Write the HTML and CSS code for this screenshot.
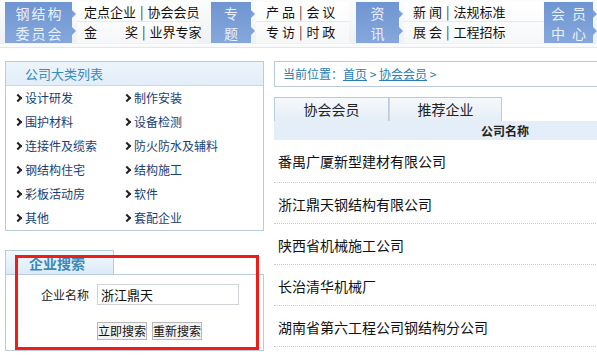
FILE: index.html
```html
<!DOCTYPE html>
<html lang="zh-CN">
<head>
<meta charset="utf-8">
<title>协会会员</title>
<link rel="stylesheet" href="styles.css">
</head>
<body>
<div class="page">
  <div class="header">
    <div class="group g1">
      <div class="blk b1"><div class="bl">钢结构</div><div class="bl">委员会</div></div>
      <div class="notches"><i></i><i></i></div>
      <div class="links l1">
        <div class="lrow">定点企业<span class="sep">|</span>协会会员</div>
        <div class="lrow">金<span class="sp2"></span>奖<span class="sep">|</span>业界专家</div>
      </div>
    </div>
    <div class="group g2">
      <div class="blk b2"><div class="bl">专</div><div class="bl">题</div></div>
      <div class="notches"><i></i><i></i></div>
      <div class="links l2">
        <div class="lrow wide">产 品<span class="sep">|</span>会 议</div>
        <div class="lrow wide">专 访<span class="sep">|</span>时 政</div>
      </div>
    </div>
    <div class="group g3">
      <div class="blk b3"><div class="bl">资</div><div class="bl">讯</div></div>
      <div class="notches"><i></i><i></i></div>
      <div class="links l3">
        <div class="lrow">新 闻<span class="sep">|</span>法规标准</div>
        <div class="lrow">展 会<span class="sep">|</span>工程招标</div>
      </div>
    </div>
    <div class="group g4">
      <div class="blk b4"><div class="bl">会 员</div><div class="bl">中 心</div></div>
      <div class="notches"><i></i><i></i></div>
    </div>
  </div>

  <div class="main">
    <div class="side">
      <div class="catbox">
        <div class="cathead">公司大类列表</div>
        <ul class="catlist">
          <li>设计研发</li><li>制作安装</li>
          <li>围护材料</li><li>设备检测</li>
          <li>连接件及缆索</li><li>防火防水及辅料</li>
          <li>钢结构住宅</li><li>结构施工</li>
          <li>彩板活动房</li><li>软件</li>
          <li>其他</li><li>套配企业</li>
        </ul>
      </div>
      <div class="search">
        <div class="stab">企业搜索</div>
        <div class="sbox">
          <div class="srow">
            <span class="slabel">企业名称</span>
            <input class="sinput" type="text" value="浙江鼎天">
          </div>
          <div class="sbtns">
            <button class="btn">立即搜索</button>
            <button class="btn">重新搜索</button>
          </div>
        </div>
        <div class="redmark"></div>
      </div>
    </div>

    <div class="content">
      <div class="crumb">当前位置：<a>首页</a> &gt; <a>协会会员</a> &gt;</div>
      <div class="tabs">
        <div class="tab">协会会员</div>
        <div class="tab">推荐企业</div>
      </div>
      <div class="thead">公司名称</div>
      <ul class="rows">
        <li>番禺广厦新型建材有限公司</li>
        <li>浙江鼎天钢结构有限公司</li>
        <li>陕西省机械施工公司</li>
        <li>长治清华机械厂</li>
        <li>湖南省第六工程公司钢结构分公司</li>
      </ul>
    </div>
  </div>
</div>
</body>
</html>
```

FILE: styles.css
```css
* { box-sizing: border-box; }
html, body { margin: 0; padding: 0; background: #fff; overflow: hidden; }
body {
  font-family: "Noto Sans CJK SC", "Noto Sans", sans-serif;
  font-size: 12px;
  color: #222;
  width: 597px;
  height: 359px;
}
.page { width: 760px; }

/* header */
.header {
  height: 48px;
  display: flex;
  align-items: flex-start;
  padding: 2px 0 0 5px;
  background: linear-gradient(#fbfcfd, #eef1f5 44px, #ffffff 44px, #f3f5f8 48px);
  border-bottom: 1px solid #e4e8ee;
}
.group { display: flex; align-items: stretch; height: 41px; }
.blk {
  background: linear-gradient(180deg, #6f95d1 0%, #85a7dc 100%);
  color: #e8f0fb;
  font-size: 14px;
  text-align: center;
  padding-top: 1px;
  display: flex;
  flex-direction: column;
}
.bl { height: 20px; line-height: 20px; letter-spacing: 2px; text-indent: 2px; white-space: nowrap; }
.b1 { width: 67px; }
.b2 { width: 40px; }
.b3 { width: 43px; }
.b4 { width: 49px; }
.notches {
  width: 5px;
  display: flex;
  flex-direction: column;
  justify-content: space-around;
  padding: 3px 0;
}
.notches i {
  display: block;
  width: 0; height: 0;
  border-top: 4px solid transparent;
  border-bottom: 4px solid transparent;
  border-left: 4px solid #7fa1d9;
}
.links {
  display: flex;
  flex-direction: column;
  background: linear-gradient(#ffffff, #f6f7f9);
  font-size: 13px;
  color: #111;
}
.lrow { height: 20px; line-height: 20px; padding-left: 7px; white-space: nowrap; }
.lrow:first-child { border-bottom: 1px solid #e6e9ee; }
.sep { display: inline-block; margin: 0 4px; color: #333; }
.sp2 { display: inline-block; width: 28px; }
.l1 { width: 121px; margin-right: 13px; }
.l2 { width: 93px; margin-right: 7px; }
.l2 .lrow { padding-left: 10px; }
.l3 { width: 140px; }
.l3 .lrow { padding-left: 9px; }

/* main */
.main { display: flex; align-items: flex-start; padding: 13px 0 0 5px; }
.side { width: 259px; flex: none; }
.catbox { border: 1px solid #b9cbdc; }
.cathead {
  height: 24px;
  line-height: 23px;
  padding-left: 19px;
  font-size: 13px;
  color: #3b88bb;
  background: linear-gradient(#edf5fc, #e1edf8);
  border-bottom: 1px solid #c9d9e8;
}
.catlist {
  list-style: none;
  margin: 0;
  padding: 0 0 0 9px;
  display: grid;
  grid-template-columns: 109px 140px;
  grid-auto-rows: 24px;
}
.catlist li {
  line-height: 24px;
  font-size: 12px;
  color: #173e74;
  white-space: nowrap;
  display: flex;
  align-items: center;
}
.catlist li::before {
  content: "";
  width: 4px; height: 4px;
  border-right: 2px solid #222;
  border-top: 2px solid #222;
  transform: rotate(45deg);
  margin: 0 4px 0 0;
}

.search { position: relative; margin-top: 19px; }
.stab {
  width: 109px;
  height: 24px;
  line-height: 24px;
  padding-left: 23px;
  font-size: 14px;
  font-weight: bold;
  color: #3b88bb;
  background: linear-gradient(#f2f8fd, #dcebf8);
  border: 1px solid #b9cbdc;
  border-bottom: none;
}
.sbox {
  border: 1px solid #b9cbdc;
  height: 77px;
  padding-top: 9px;
}
.srow { display: flex; align-items: center; }
.slabel { width: 91px; text-align: right; padding-right: 8px; font-size: 12px; color: #222; }
.sinput {
  width: 142px;
  height: 21px;
  border: 1px solid #cfd3d8;
  font-family: inherit;
  font-size: 13px;
  padding: 0 3px;
  color: #111;
  outline: none;
}
.sbtns { display: flex; gap: 5px; padding: 17px 0 0 91px; }
.btn {
  font-family: inherit;
  font-size: 12px;
  width: 50px;
  height: 18px;
  line-height: 14px;
  padding: 0;
  background: #f3f3f3;
  border: 1px solid #b8b8b8;
  color: #111;
}
.redmark {
  position: absolute;
  left: 10px;
  top: 5px;
  width: 244px;
  height: 95px;
  border: 3px solid #f01d17;
  pointer-events: none;
}

/* content */
.content { margin-left: 10px; width: 462px; flex: none; }
.crumb {
  height: 26px;
  line-height: 24px;
  border: 1px solid #b9cbdc;
  padding-left: 8px;
  color: #2a7db4;
  font-size: 12px;
}
.crumb a { text-decoration: underline; color: #2a7db4; }
.tabs { display: flex; margin-top: 10px; }
.tab {
  height: 24px;
  line-height: 22px;
  text-align: center;
  font-size: 14px;
  color: #222;
  background: linear-gradient(#f6f9fc, #e4edf6);
  border: 1px solid #b9cbdc;
  border-bottom: none;
}
.tab:first-child { width: 115px; }
.tab:last-child { width: 113px; border-left: 1px solid #c8d6e3; }
.thead {
  height: 19px;
  line-height: 19px;
  text-align: center;
  font-weight: bold;
  font-size: 12px;
  background: #e3eef9;
  color: #222;
}
.rows { list-style: none; margin: 0; padding: 0; }
.rows li {
  height: 41px;
  line-height: 42px;
  padding-left: 4px;
  font-size: 14px;
  color: #111;
  border-bottom: 1px dotted #c8c8c8;
}
.rows li:first-child { height: 43px; }
```
